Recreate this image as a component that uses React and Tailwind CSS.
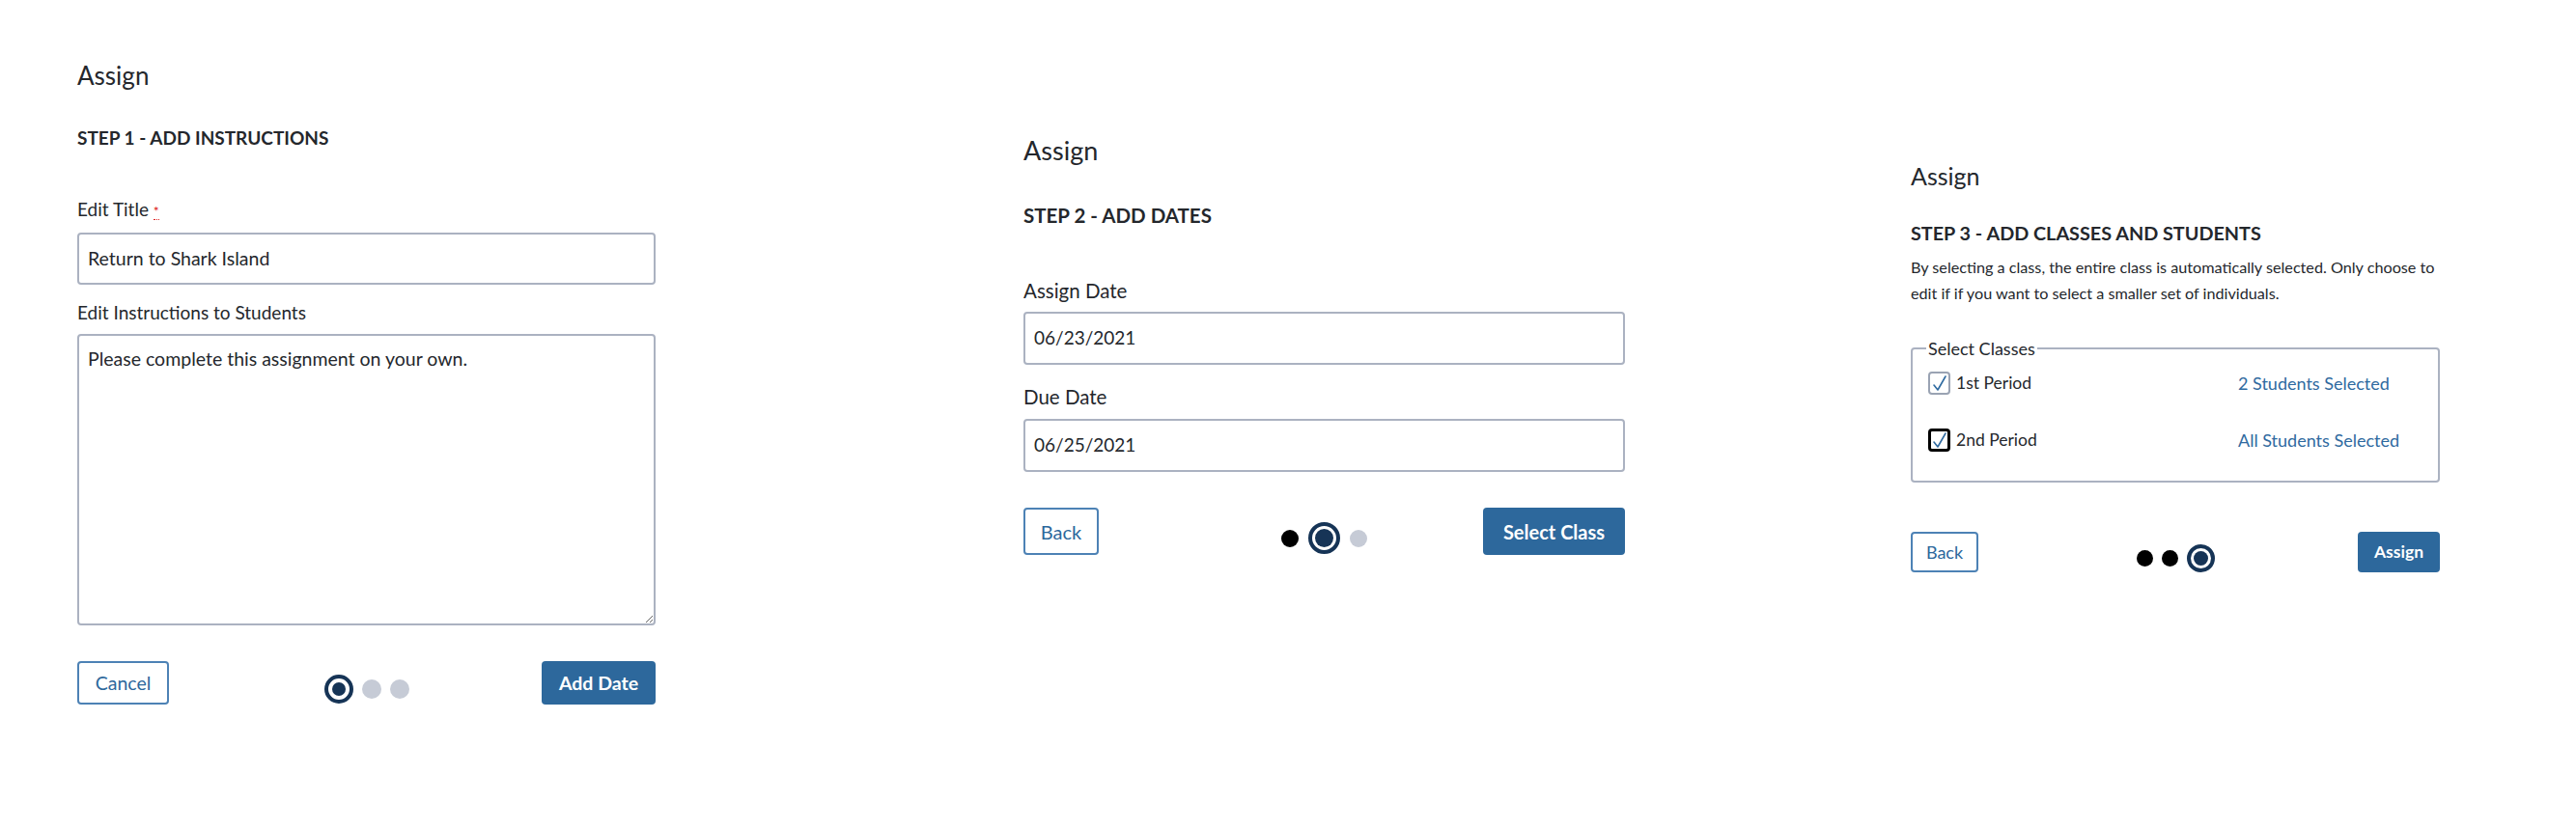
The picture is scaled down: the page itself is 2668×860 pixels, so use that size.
import React from "react";

const font = { fontFamily: "Lato, 'Liberation Sans', sans-serif" };

function Dots({ active, size }) {
  // size: "md" | "lg" | "sm"
  const ring =
    size === "lg"
      ? "w-[33px] h-[33px] border-[4px]"
      : size === "sm"
      ? "w-[29px] h-[29px] border-[4px]"
      : "w-[30px] h-[30px] border-[4px]";
  const inner = size === "lg" ? "w-[19px] h-[19px]" : size === "sm" ? "w-[15px] h-[15px]" : "w-[14px] h-[14px]";
  const dot = size === "sm" ? "w-[17px] h-[17px]" : size === "lg" ? "w-[18px] h-[18px]" : "w-[20px] h-[20px]";
  return (
    <div className={`flex items-center ${size === "lg" ? "gap-[10px] mt-[14px]" : "gap-[9px] mt-[12px]"}`}>
      {[0, 1, 2].map((i) =>
        i === active ? (
          <div key={i} className={`${ring} rounded-full border-[#163456] flex items-center justify-center`}>
            <div className={`${inner} rounded-full bg-[#163456]`} />
          </div>
        ) : (
          <div key={i} className={`${dot} rounded-full ${i < active ? "bg-black" : "bg-[#c6cbd6]"}`} />
        )
      )}
    </div>
  );
}

function StepOne() {
  return (
    <div className="w-[599px] mt-[62px] text-[#24272c]">
      <h2 className="text-[26px] leading-[32px]">Assign</h2>
      <h3 className="mt-[37px] text-[19px] leading-[24px] font-bold">STEP 1 - ADD INSTRUCTIONS</h3>
      <label className="block mt-[50px] text-[19px] leading-[24px]">
        Edit Title{" "}
        <abbr className="text-[#d22] no-underline border-b border-dotted border-[#d22] text-[14px]" title="required">
          *
        </abbr>
      </label>
      <div className="mt-[10px] h-[54px] border-2 border-[#abb2c1] rounded-[4px] px-[9px] flex items-center text-[19.5px]">
        Return to Shark Island
      </div>
      <label className="block mt-[17px] text-[19px] leading-[24px]">Edit Instructions to Students</label>
      <textarea
        readOnly
        defaultValue="Please complete this assignment on your own."
        className="mt-[10px] block w-full h-[302px] border-2 border-[#abb2c1] rounded-[4px] px-[9px] py-[12px] text-[19.5px] leading-[24px] text-[#24272c] outline-none"
        style={font}
      />
      <div className="mt-[37px] grid grid-cols-[1fr_auto_1fr] items-center">
        <button className="justify-self-start h-[45px] w-[95px] border-2 border-[#4d82b5] rounded-[4px] text-[#2d689c] text-[19.5px]">
          Cancel
        </button>
        <Dots active={0} size="md" />
        <button className="justify-self-end h-[45px] w-[118px] bg-[#2d689c] rounded-[4px] text-white text-[19.5px] font-bold">
          Add Date
        </button>
      </div>
    </div>
  );
}

function StepTwo() {
  return (
    <div className="w-[623px] mt-[140px] ml-[381px] text-[#24272c]">
      <h2 className="text-[27px] leading-[32px]">Assign</h2>
      <h3 className="mt-[39px] text-[20.5px] leading-[24px] font-bold">STEP 2 - ADD DATES</h3>
      <label className="block mt-[54px] text-[20.5px] leading-[24px]">Assign Date</label>
      <div className="mt-[10px] h-[55px] border-2 border-[#abb2c1] rounded-[4px] px-[9px] flex items-center text-[19px]">
        06/23/2021
      </div>
      <label className="block mt-[21px] text-[20.5px] leading-[24px]">Due Date</label>
      <div className="mt-[11px] h-[55px] border-2 border-[#abb2c1] rounded-[4px] px-[9px] flex items-center text-[19px]">
        06/25/2021
      </div>
      <div className="mt-[37px] grid grid-cols-[1fr_auto_1fr] items-center">
        <button className="justify-self-start h-[49px] w-[78px] border-2 border-[#4d82b5] rounded-[4px] text-[#2d689c] text-[20px]">
          Back
        </button>
        <Dots active={1} size="lg" />
        <button className="justify-self-end h-[49px] w-[147px] bg-[#2d689c] rounded-[4px] text-white text-[20px] font-bold">
          Select Class
        </button>
      </div>
    </div>
  );
}

function Check({ focused }) {
  return (
    <div
      className={`w-[23px] h-[24px] rounded-[4px] flex items-center justify-center ${
        focused ? "border-[3px] border-black" : "border-2 border-[#9aa3b3]"
      }`}
    >
      <svg width="16" height="18" viewBox="0 0 16 18" fill="none">
        <path d="M2 11 L6 16 L14 2" stroke="#2f6aa0" strokeWidth="1.6" strokeLinecap="round" strokeLinejoin="round" />
      </svg>
    </div>
  );
}

function StepThree() {
  return (
    <div className="w-[548px] mt-[168px] ml-[296px] text-[#24272c]">
      <h2 className="text-[25px] leading-[28px]">Assign</h2>
      <h3 className="mt-[35px] text-[19.8px] leading-[20px] font-bold">STEP 3 - ADD CLASSES AND STUDENTS</h3>
      <p className="mt-[12px] text-[16.2px] leading-[27px]">
        By selecting a class, the entire class is automatically selected. Only choose to edit if if you want to select
        a smaller set of individuals.
      </p>
      <fieldset className="mt-[34px] border-2 border-[#abb2c1] rounded-[4px] pl-[16px] pr-[37px] pb-[29px] pt-[13px]">
        <legend className="ml-[-2px] px-[2px] text-[18px] leading-[20px]">Select Classes</legend>
        <div className="flex items-center justify-between h-[26px]">
          <div className="flex items-center gap-[6px]">
            <Check />
            <span className="text-[17.5px]">1st Period</span>
          </div>
          <span className="text-[18px] text-[#2f6aa0] w-[170px] whitespace-nowrap">2 Students Selected</span>
        </div>
        <div className="mt-[33px] flex items-center justify-between h-[26px]">
          <div className="flex items-center gap-[6px]">
            <Check focused />
            <span className="text-[17.5px]">2nd Period</span>
          </div>
          <span className="text-[18px] text-[#2f6aa0] w-[170px] whitespace-nowrap">All Students Selected</span>
        </div>
      </fieldset>
      <div className="mt-[51px] grid grid-cols-[1fr_auto_1fr] items-center">
        <button className="justify-self-start h-[42px] w-[70px] border-2 border-[#4d82b5] rounded-[4px] text-[#2d689c] text-[18px]">
          Back
        </button>
        <Dots active={2} size="sm" />
        <button className="justify-self-end h-[42px] w-[85px] bg-[#2d689c] rounded-[4px] text-white text-[17.5px] font-bold">
          Assign
        </button>
      </div>
    </div>
  );
}

export default function App() {
  return (
    <div className="w-[2668px] h-[860px] bg-white flex items-start pl-[80px]" style={font}>
      <StepOne />
      <StepTwo />
      <StepThree />
    </div>
  );
}
